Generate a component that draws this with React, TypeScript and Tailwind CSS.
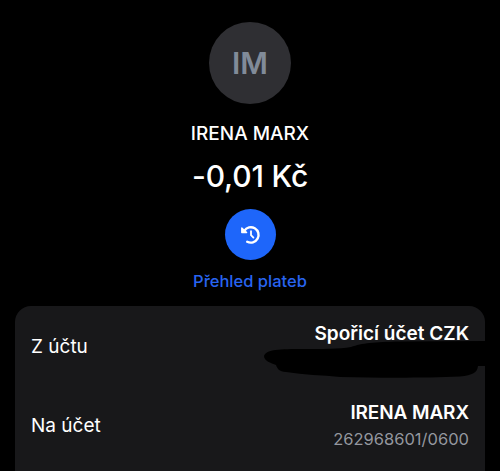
function HistoryIcon() {
  return (
    <svg className="ml-px" width="24" height="24" viewBox="0 0 24 24" fill="none" stroke="white" strokeLinecap="round" strokeLinejoin="round">
      <path d="M5.3 7.9A7.7 7.7 0 1 1 8.200 18.700" strokeWidth="2.4" />
      <path d="M2.8 4.9V9.6H7.6Z" fill="white" strokeWidth="1.4" />
      <path d="M12 8.2V12.2L14.4 14.6" strokeWidth="1.8" />
    </svg>
  );
}

export default function App() {
  return (
    <main className="flex h-[471px] w-[500px] flex-col overflow-hidden bg-black font-['Inter',sans-serif] text-white">
      <header className="flex h-[306px] shrink-0 flex-col items-center pt-[22px]">
        <div className="flex size-[82px] items-center justify-center rounded-full bg-[#2f2f33] text-[30px] font-semibold text-[#818b99]">
          IM
        </div>
        <h1 className="mt-[18px] text-[19px] leading-6 font-medium whitespace-nowrap">IRENA MARX</h1>
        <p className="mt-[12px] text-[30px] leading-9 font-medium tracking-[-0.15px] whitespace-nowrap">-0,01 Kč</p>
        <button className="mt-[15px] flex size-[51px] shrink-0 items-center justify-center rounded-full bg-[#1e66fa]">
          <HistoryIcon />
        </button>
        <span className="mt-[11px] text-[16.5px] leading-5 font-medium whitespace-nowrap text-[#2864f0]">Přehled plateb</span>
      </header>
      <section className="relative mx-[15px] h-[180px] shrink-0 rounded-[16px] bg-[#18181a] px-4">
        <div className="flex h-20 justify-between">
          <span className="pt-[29px] text-[19px] leading-6">Z účtu</span>
          <span className="pt-[16px] text-[19px] leading-6 font-semibold">Spořicí účet CZK</span>
        </div>
        <div className="flex h-20 justify-between">
          <span className="pt-[28px] text-[19px] leading-6">Na účet</span>
          <div className="flex flex-col items-end pt-[15px]">
            <span className="text-[19px] leading-6 font-semibold tracking-[-0.1px]">IRENA MARX</span>
            <span className="mt-[4px] text-[16.5px] leading-5 text-[#94979f]">262968601/0600</span>
          </div>
        </div>
        <svg className="absolute top-[33px] left-[245px]" width="225" height="42" viewBox="0 0 225 42" fill="black">
          <path d="M4 17C6 11 15 10 40 10C63 10 79 10 91 8C102 4 114 3 140 2.500L225 2V27H218C217 34 213 36 200 37.500C166 39 122 39 80 38C62 36 44 36 26 33C19 33 17 29 16 26C11 24 4 22 4 17Z" />
        </svg>
      </section>
    </main>
  );
}
